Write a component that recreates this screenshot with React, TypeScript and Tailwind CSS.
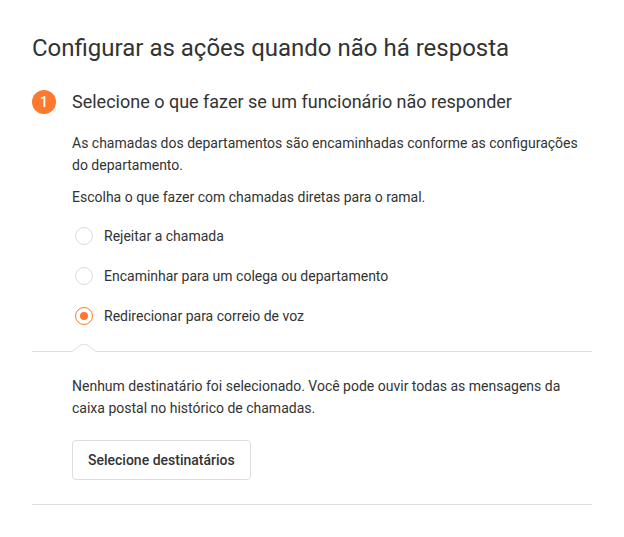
import React from "react";

const options = [
  { label: "Rejeitar a chamada", checked: false },
  { label: "Encaminhar para um colega ou departamento", checked: false },
  { label: "Redirecionar para correio de voz", checked: true },
];

export default function App() {
  return (
    <div className="min-h-[537px] bg-white px-8 pt-8 text-[#333333]" style={{ fontFamily: "Roboto, 'Noto Sans', sans-serif" }}>
      <h1 className="text-[24px] leading-8 font-normal">Configurar as ações quando não há resposta</h1>

      <div className="mt-6 flex items-center">
        <div className="flex h-6 w-6 items-center justify-center rounded-full bg-[#fb7a2e] text-[14px] font-medium text-white">1</div>
        <h2 className="ml-4 text-[18px] leading-7 font-normal">Selecione o que fazer se um funcionário não responder</h2>
      </div>

      <div className="pl-10">
        <p className="mt-4 text-[14px] leading-[22px]">
          As chamadas dos departamentos são encaminhadas conforme as configurações do departamento.
        </p>
        <p className="mt-[10px] text-[14px] leading-[22px]">Escolha o que fazer com chamadas diretas para o ramal.</p>

        <div className="mt-[8px] flex flex-col">
          {options.map((o) => (
            <label key={o.label} className="flex h-10 items-center">
              <span
                className={
                  o.checked
                    ? "ml-[3px] flex h-[18px] w-[18px] items-center justify-center rounded-full border border-[#fb7a2e]"
                    : "ml-[3px] flex h-[18px] w-[18px] items-center justify-center rounded-full border border-[#dcdcdc]"
                }
              >
                {o.checked && <span className="h-2 w-2 rounded-full bg-[#fb7a2e]" />}
              </span>
              <span className="ml-[11px] text-[14px] leading-[22px]">{o.label}</span>
            </label>
          ))}
        </div>
      </div>

      <div className="mt-[8px] flex items-end">
        <div className="h-px w-10 bg-[#dedede]" />
        <svg width="24" height="8" viewBox="0 0 24 8" className="block">
          <path d="M0 7.5 L9 0.8 Q12 -0.8 15 0.8 L24 7.5" fill="none" stroke="#dedede" strokeWidth="1" />
        </svg>
        <div className="h-px flex-1 bg-[#dedede]" />
      </div>

      <div className="pl-10 pt-[23px] pb-[24px]">
        <p className="text-[14px] leading-[22px]">
          Nenhum destinatário foi selecionado. Você pode ouvir todas as mensagens da caixa postal no histórico de chamadas.
        </p>
        <button className="mt-[21px] h-10 rounded border border-[#dcdcdc] bg-white px-[15px] text-[14px] font-medium text-[#333333]">
          Selecione destinatários
        </button>
      </div>
      <div className="h-px bg-[#dedede]" />
    </div>
  );
}
